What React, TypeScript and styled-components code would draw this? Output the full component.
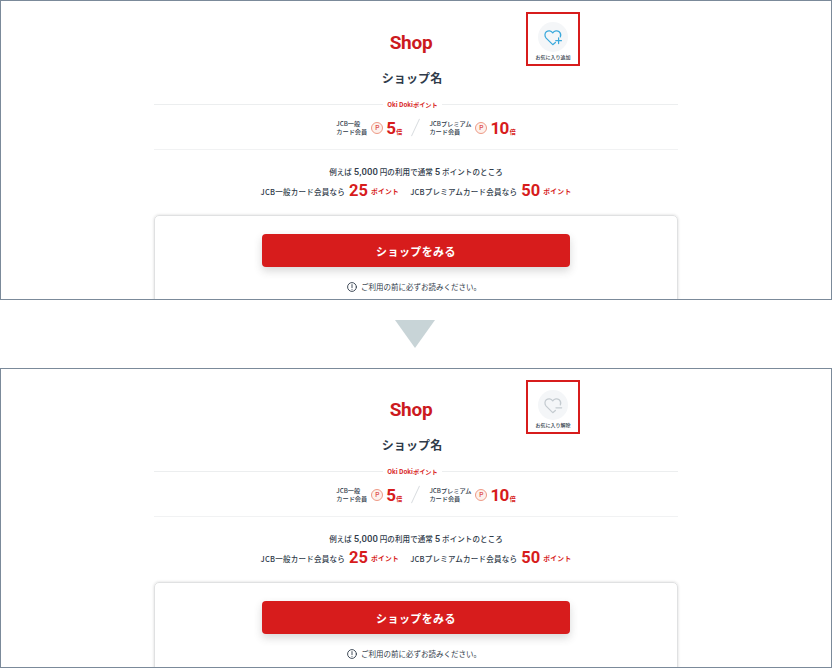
import React from "react";
import styled, { createGlobalStyle } from "styled-components";

const JP = `"Noto Sans CJK JP", "Noto Sans", sans-serif`;
const LATIN = `Roboto, "Noto Sans CJK JP", sans-serif`;
const RED = "#d71c1c";
const INK = "#2f3b4a";

const GlobalStyle = createGlobalStyle`
  html, body { margin: 0; padding: 0; background: #fff; }
  body { font-family: ${JP}; color: ${INK}; }
`;

function HeartIcon({ mode }: { mode: "add" | "remove" }) {
  const color = mode === "add" ? "#3aa9dc" : "#c4cbd0";
  return (
    <svg width="19" height="17" viewBox="0 0 20 18" fill="none" stroke={color} strokeWidth="1.3" strokeLinejoin="round" strokeLinecap="round">
      <path d="M12 14.2 L9.2 16.6 L2.2 9.6 C0.4 7.6 0.6 4.6 2.4 3 C4.4 1.3 7.4 1.6 9.2 4.2 C11 1.6 14 1.3 16 3 C17.6 4.4 18 6.6 17.2 8.4" />
      {mode === "add" ? (
        <path d="M15.4 9.4 V15.4 M12.4 12.4 H18.4" />
      ) : (
        <path d="M12.6 11.4 H18.6" />
      )}
    </svg>
  );
}

function InfoIcon() {
  return (
    <svg width="10" height="10" viewBox="0 0 10 10" fill="none" stroke={INK} strokeWidth="0.9" strokeLinecap="round">
      <circle cx="5" cy="5" r="4.4" />
      <path d="M5 2.6 V5.6 M5 7.3 V7.4" />
    </svg>
  );
}

function ShopPanel({ mode, lift }: { mode: "add" | "remove"; lift: number }) {
  return (
    <Frame>
      <FavouriteBox>
        <FavouriteCircle>
          <HeartIcon mode={mode} />
        </FavouriteCircle>
        <FavouriteLabel>{mode === "add" ? "お気に入り追加" : "お気に入り解除"}</FavouriteLabel>
      </FavouriteBox>
      <Column $lift={lift}>
        <ShopTitle>Shop</ShopTitle>
        <ShopName>ショップ名</ShopName>
        <Divider>
          <DividerLabel>Oki Dokiポイント</DividerLabel>
        </Divider>
        <RateRow>
          <RateItem>
            <RateLabel>
              JCB一般
              <br />
              カード会員
            </RateLabel>
            <PointMark>P</PointMark>
            <RateValue>5</RateValue>
            <RateUnit>倍</RateUnit>
          </RateItem>
          <Slash />
          <RateItem>
            <RateLabel>
              JCBプレミアム
              <br />
              カード会員
            </RateLabel>
            <PointMark>P</PointMark>
            <RateValue>10</RateValue>
            <RateUnit>倍</RateUnit>
          </RateItem>
        </RateRow>
        <ExampleBlock>
          <ExampleLead>
            例えば <b>5,000</b> 円の利用で通常 <b>5</b> ポイントのところ
          </ExampleLead>
          <ExampleRow>
            <ExampleItem>
              JCB一般カード会員なら<BigPoint>25</BigPoint>
              <PointUnit>ポイント</PointUnit>
            </ExampleItem>
            <ExampleItem>
              JCBプレミアムカード会員なら<BigPoint>50</BigPoint>
              <PointUnit>ポイント</PointUnit>
            </ExampleItem>
          </ExampleRow>
        </ExampleBlock>
        <Card>
          <ShopButton>ショップをみる</ShopButton>
          <Notice>
            <InfoIcon />
            ご利用の前に必ずお読みください。
          </Notice>
        </Card>
      </Column>
    </Frame>
  );
}

export default function App() {
  return (
    <Page>
      <GlobalStyle />
      <ShopPanel mode="add" lift={0} />
      <ArrowRow>
        <svg width="40" height="28" viewBox="0 0 40 28">
          <path d="M0 0 H40 L20 28 Z" fill="#c8d4d7" />
        </svg>
      </ArrowRow>
      <ShopPanel mode="remove" lift={1} />
    </Page>
  );
}

const Page = styled.div`
  width: 832px;
  height: 668px;
  overflow: hidden;
`;

const Frame = styled.section`
  position: relative;
  box-sizing: border-box;
  width: 832px;
  height: 300px;
  border: 1px solid #7b8a9a;
  overflow: hidden;
  background: #fff;
`;

const ArrowRow = styled.div`
  height: 68px;
  display: flex;
  justify-content: center;
  align-items: flex-start;
  padding-top: 20px;
  box-sizing: border-box;
  margin-left: -2px;
`;

const FavouriteBox = styled.div`
  position: absolute;
  top: 11px;
  left: 525px;
  box-sizing: border-box;
  width: 54px;
  height: 54px;
  border: 2px solid ${RED};
  display: flex;
  flex-direction: column;
  align-items: center;
  padding-top: 8px;
`;

const FavouriteCircle = styled.div`
  width: 30px;
  height: 30px;
  border-radius: 50%;
  background: #f4f6f8;
  display: flex;
  align-items: center;
  justify-content: center;
`;

const FavouriteLabel = styled.div`
  font-size: 5px;
  line-height: 8px;
  margin-top: 1px;
  white-space: nowrap;
  font-weight: 500;
`;

const Column = styled.div<{ $lift: number }>`
  width: 524px;
  margin: ${(p) => 27 - p.$lift}px 0 0 153px;
  display: flex;
  flex-direction: column;
  align-items: center;
`;

const ShopTitle = styled.h1`
  margin: 0 10px 0 0;
  font-family: ${LATIN};
  font-size: 19px;
  line-height: 30px;
  font-weight: 700;
  letter-spacing: -0.3px;
  color: #cc1a1e;
`;

const ShopName = styled.h2`
  margin: 10px 8px 0 0;
  font-size: 12px;
  line-height: 20px;
  font-weight: 700;
  letter-spacing: 0.1px;
`;

const Divider = styled.div`
  width: 100%;
  height: 1px;
  margin-top: 16px;
  background: #eceeef;
  display: flex;
  justify-content: center;
  align-items: center;
`;

const DividerLabel = styled.span`
  background: #fff;
  margin-right: 7px;
  padding: 0 4px;
  font-size: 6.2px;
  font-weight: 700;
  color: ${RED};
  white-space: nowrap;
`;

const RateRow = styled.div`
  box-sizing: border-box;
  width: 100%;
  height: 45px;
  padding: 1px 0 0 20px;
  border-bottom: 1px solid #f1f2f3;
  display: flex;
  justify-content: center;
  align-items: center;
  gap: 10px;
`;

const RateItem = styled.div`
  display: flex;
  align-items: center;
`;

const RateLabel = styled.div`
  font-size: 6.2px;
  line-height: 7.5px;
  font-weight: 500;
  white-space: nowrap;
`;

const PointMark = styled.span`
  box-sizing: border-box;
  width: 12px;
  height: 12px;
  margin: 0 3px 0 4px;
  border: 1px solid #ee9a86;
  border-radius: 50%;
  background: #fdf1ec;
  color: ${RED};
  font-family: ${LATIN};
  font-size: 6.5px;
  display: flex;
  align-items: center;
  justify-content: center;
`;

const RateValue = styled.span`
  font-family: ${LATIN};
  font-size: 17px;
  line-height: 18px;
  font-weight: 700;
  letter-spacing: -0.6px;
  color: ${RED};
`;

const RateUnit = styled.span`
  align-self: flex-end;
  margin-left: 1px;
  font-size: 6px;
  line-height: 11px;
  font-weight: 700;
  color: ${RED};
`;

const Slash = styled.span`
  width: 1px;
  height: 19px;
  background: #d8dcdf;
  transform: rotate(25deg);
  margin: 0 3px;
`;

const ExampleBlock = styled.div`
  margin-top: 14px;
  display: flex;
  flex-direction: column;
  align-items: center;
`;

const ExampleLead = styled.p`
  margin: 0;
  font-size: 7.5px;
  line-height: 16px;
  font-weight: 500;
  letter-spacing: 0.1px;
  white-space: nowrap;

  b {
    font-family: ${LATIN};
    font-size: 9.5px;
    font-weight: 500;
  }
`;

const ExampleRow = styled.div`
  height: 20px;
  margin-top: 1px;
  display: flex;
  align-items: center;
  gap: 11px;
`;

const ExampleItem = styled.span`
  font-size: 7.5px;
  font-weight: 500;
  letter-spacing: 0.25px;
  white-space: nowrap;
  display: flex;
  align-items: center;
`;

const BigPoint = styled.span`
  font-family: ${LATIN};
  font-size: 16.5px;
  line-height: 20px;
  font-weight: 700;
  letter-spacing: 0;
  color: ${RED};
  margin: 0 3px 0 4px;
`;

const PointUnit = styled.span`
  font-size: 6.8px;
  font-weight: 700;
  color: ${RED};
`;

const Card = styled.div`
  box-sizing: border-box;
  width: 100%;
  height: 120px;
  margin-top: 14px;
  padding-top: 18px;
  border: 1px solid #e0e1e2;
  border-radius: 5px;
  box-shadow: 0 0 3px rgba(0, 0, 0, 0.16);
  display: flex;
  flex-direction: column;
  align-items: center;
`;

const ShopButton = styled.button`
  width: 308px;
  height: 33px;
  padding: 0;
  border: 0;
  border-radius: 4px;
  background: ${RED};
  color: #fff;
  font-family: ${JP};
  font-size: 11px;
  font-weight: 700;
  letter-spacing: 0.4px;
  box-shadow: 0 4px 8px rgba(60, 60, 60, 0.2);
`;

const Notice = styled.div`
  margin: 14px 4px 0 0;
  display: flex;
  align-items: center;
  gap: 4px;
  font-size: 7.5px;
  line-height: 12px;
  white-space: nowrap;
`;
